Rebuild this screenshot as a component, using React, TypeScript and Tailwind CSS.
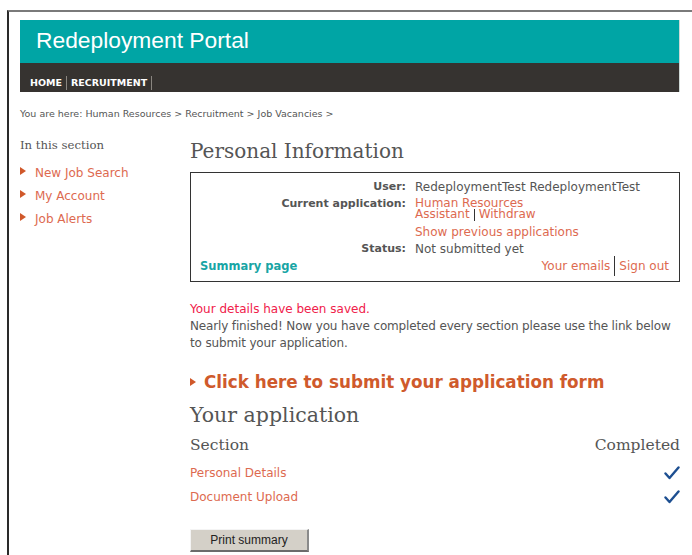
import React from "react";

const verdana = { fontFamily: '"DejaVu Sans", Verdana, sans-serif' };
const serif = { fontFamily: '"DejaVu Serif", Georgia, serif' };

function Arrow({ className = "" }: { className?: string }) {
  return (
    <svg width="6" height="8" viewBox="0 0 6 8" className={className}>
      <path d="M0 0 L6 4 L0 8 Z" fill="#d0582a" />
    </svg>
  );
}

function Check() {
  return (
    <svg width="16" height="14" viewBox="0 0 16 14">
      <path
        d="M1.5 7.5 L5.5 12 L14.5 1.5"
        fill="none"
        stroke="#1d4f91"
        strokeWidth="2.4"
        strokeLinecap="round"
        strokeLinejoin="round"
      />
    </svg>
  );
}

export default function App() {
  return (
    <div className="w-[692px] h-[555px] bg-white overflow-hidden">
      <div className="mt-[10px] ml-[7px] h-[545px] border-t-2 border-l-2 border-t-[#7a7a7a] border-l-[#2a2a2a] pl-[11px] pt-[8px] pr-[12px]">
        {/* banner */}
        <div className="w-[660px] border-r border-[#cfd8d6]">
          <div className="h-[43px] bg-[#00a5a5] pl-[16px] pt-[9px]">
            <div className="text-white text-[22.8px] leading-none" style={{ fontFamily: '"Liberation Sans", Arial, sans-serif' }}>
              Redeployment Portal
            </div>
          </div>
          <div className="h-[29px] bg-[#363330] flex items-end pl-[10px] pb-[2px]">
            <div className="flex items-center text-white text-[9.5px] font-bold" style={verdana}>
              <span className="pr-[4px]">HOME</span>
              <span className="w-px h-[14px] bg-[#8a8680]"></span>
              <span className="px-[4px]">RECRUITMENT</span>
              <span className="w-px h-[14px] bg-[#8a8680]"></span>
            </div>
          </div>
        </div>

        {/* breadcrumb */}
        <div className="mt-[17px] text-[9.5px] text-[#555] leading-none" style={verdana}>
          You are here: Human Resources &gt; Recruitment &gt; Job Vacancies &gt;
        </div>

        <div className="flex mt-[17px]">
          {/* left navigation */}
          <div className="w-[170px] shrink-0">
            <div className="text-[11.7px] text-[#555] leading-none mt-[4px]" style={serif}>
              In this section
            </div>
            <div className="mt-[15px] flex flex-col gap-[9px] text-[12px] text-[#dd6a50] leading-[14px]" style={verdana}>
              {["New Job Search", "My Account", "Job Alerts"].map((t) => (
                <div key={t} className="flex items-start">
                  <Arrow className="mt-[1px] mr-[9px]" />
                  <span>{t}</span>
                </div>
              ))}
            </div>
          </div>

          {/* main content */}
          <div className="w-[490px]">
            <div className="text-[20px] text-[#555] leading-none mt-[5px]" style={serif}>
              Personal Information
            </div>

            <div className="mt-[11px] border border-[#333] h-[110px] px-[9px] pt-[8px] text-[12px] leading-[12px]" style={verdana}>
              <div className="grid grid-cols-[206px_1fr] gap-x-[9px] text-[#555]">
                <div className="text-right font-bold text-[11px]">User:</div>
                <div>RedeploymentTest RedeploymentTest</div>
                <div className="text-right font-bold text-[11px] mt-[5px]">Current application:</div>
                <div className="mt-[5px] text-[#dd6a50] leading-[11px]">
                  <div>Human Resources</div>
                  <div className="flex items-center">
                    <span>Assistant</span>
                    <span className="mx-[4px] w-px h-[12px] bg-[#333]"></span>
                    <span>Withdraw</span>
                  </div>
                </div>
                <div></div>
                <div className="mt-[5px] text-[#dd6a50]">Show previous applications</div>
                <div className="text-right font-bold text-[11px] mt-[5px]">Status:</div>
                <div className="mt-[5px]">Not submitted yet</div>
              </div>
              <div className="flex justify-between items-center mt-[1px]">
                <span className="font-bold text-[#18a5a5] text-[11.5px]">Summary page</span>
                <span className="flex items-center text-[#dd6a50] mr-[1px]">
                  <span>Your emails</span>
                  <span className="mx-[4px] w-px h-[20px] bg-[#333]"></span>
                  <span>Sign out</span>
                </span>
              </div>
            </div>

            <div className="mt-[19px] text-[12px] leading-[17px] text-[#555] tracking-[-0.15px]" style={verdana}>
              <div className="text-[#f0204a] tracking-normal">Your details have been saved.</div>
              <div>Nearly finished! Now you have completed every section please use the link below to submit your application.</div>
            </div>

            <div className="flex items-center mt-[22px]">
              <Arrow className="mr-[8px]" />
              <span className="text-[16.8px] font-bold text-[#cf5a2c] leading-none" style={verdana}>
                Click here to submit your application form
              </span>
            </div>

            <div className="text-[20.5px] text-[#555] leading-none mt-[15px]" style={serif}>
              Your application
            </div>

            <div className="flex justify-between mt-[12px] text-[15.5px] text-[#555] leading-none" style={serif}>
              <span>Section</span>
              <span>Completed</span>
            </div>

            <div className="mt-[13px] flex flex-col gap-[10px] text-[12px] text-[#dd6a50] leading-[14px]" style={verdana}>
              <div className="flex justify-between items-end">
                <span>Personal Details</span>
                <Check />
              </div>
              <div className="flex justify-between items-end">
                <span>Document Upload</span>
                <Check />
              </div>
            </div>

            <button
              className="mt-[25px] w-[119px] h-[23px] bg-[#d4d0c8] text-[12px] text-[#222] border-t border-l border-t-[#f4f4f4] border-l-[#f4f4f4] border-b-2 border-r-2 border-b-[#6b6b6b] border-r-[#8a8a8a]"
              style={{ fontFamily: '"Liberation Sans", Arial, sans-serif' }}
            >
              Print summary
            </button>
          </div>
        </div>
      </div>
    </div>
  );
}
